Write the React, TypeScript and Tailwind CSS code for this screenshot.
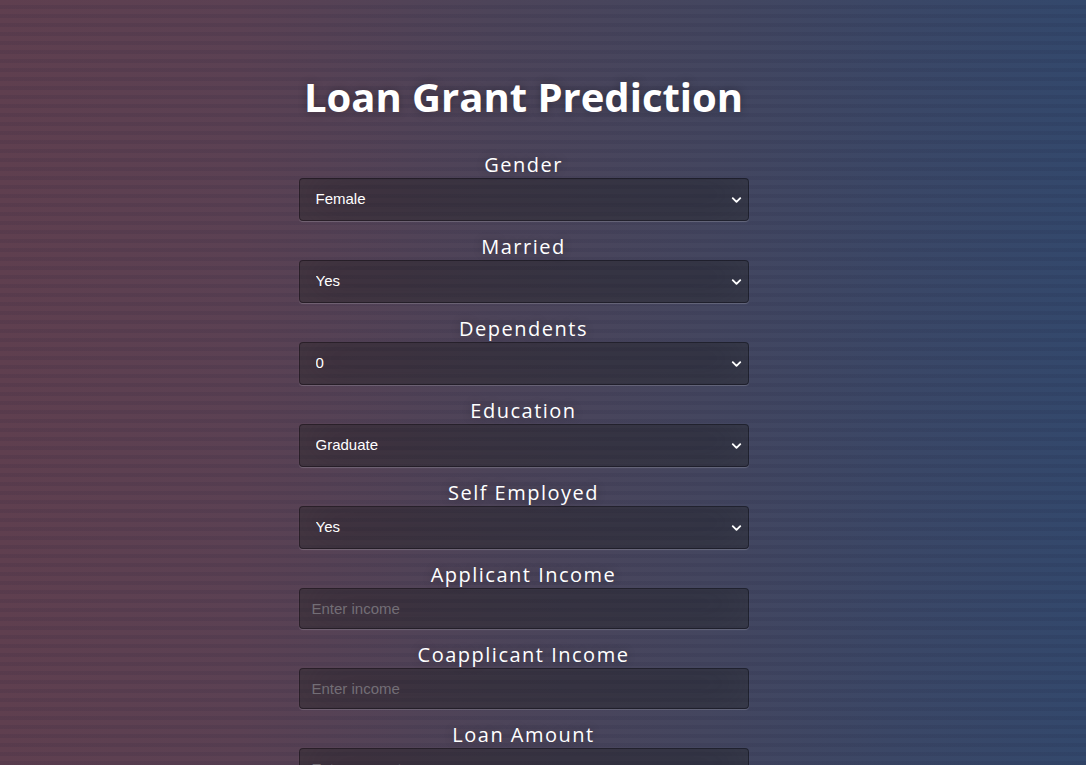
import React from 'react';
import { ChevronDown } from 'lucide-react';

interface SelectField {
  label: string;
  options: string[];
}

interface InputField {
  label: string;
  placeholder: string;
}

const selects: SelectField[] = [
  { label: 'Gender', options: ['Female', 'Male'] },
  { label: 'Married', options: ['Yes', 'No'] },
  { label: 'Dependents', options: ['0', '1', '2', '3+'] },
  { label: 'Education', options: ['Graduate', 'Not Graduate'] },
  { label: 'Self Employed', options: ['Yes', 'No'] },
];

const inputs: InputField[] = [
  { label: 'Applicant Income', placeholder: 'Enter income' },
  { label: 'Coapplicant Income', placeholder: 'Enter income' },
  { label: 'Loan Amount', placeholder: 'Enter amount' },
  { label: 'Loan Amount Term', placeholder: 'Enter term' },
];

const fieldBox =
  'w-full rounded-[4px] border border-black/30 bg-black/30 text-white text-[15px] font-["Liberation_Sans",Arial,sans-serif] outline-none shadow-[inset_0_-5px_45px_rgba(100,100,100,0.2),0_1px_1px_rgba(255,255,255,0.2)]';

const Label: React.FC<{ text: string }> = ({ text }) => (
  <label className="block text-center text-white text-[20px] leading-[27px] tracking-[1.5px] font-['Open_Sans',sans-serif] [text-shadow:0_0_10px_rgba(0,0,0,0.3)]">
    {text}
  </label>
);

const App: React.FC = () => {
  return (
    <div className="min-h-screen w-full bg-[linear-gradient(to_right,#5f3f4f_0%,#5b4153_22%,#4d4459_45%,#44465f_65%,#3b4766_82%,#33486c_100%)]">
      <div className="min-h-screen w-full flex justify-center pr-[39px] bg-[repeating-linear-gradient(to_bottom,rgba(0,0,0,0)_0px,rgba(0,0,0,0)_5px,rgba(20,20,50,0.09)_5px,rgba(20,20,50,0.09)_9px)]">
        <div className="w-[450px] pt-[73px] pb-16">
          <h1 className="mb-[30px] text-center text-white text-[40px] leading-[48px] font-bold font-['Open_Sans',sans-serif] [text-shadow:0_0_10px_rgba(0,0,0,0.3)]">
            Loan Grant Prediction
          </h1>

          <form className="flex flex-col">
            {selects.map((field) => (
              <div key={field.label} className="mb-[12px]">
                <Label text={field.label} />
                <div className="relative">
                  <select className={`${fieldBox} h-[43px] appearance-none pl-[16px] pr-10`}>
                    {field.options.map((o) => (
                      <option key={o} className="bg-[#3a3440]">{o}</option>
                    ))}
                  </select>
                  <ChevronDown
                    className="pointer-events-none absolute right-[5px] top-1/2 -translate-y-1/2 w-[15px] h-[15px] text-white"
                    strokeWidth={3}
                  />
                </div>
              </div>
            ))}

            {inputs.map((field) => (
              <div key={field.label} className="mb-[12px]">
                <Label text={field.label} />
                <input
                  type="text"
                  placeholder={field.placeholder}
                  className={`${fieldBox} h-[41px] px-[12px] placeholder:text-[#736e76]`}
                />
              </div>
            ))}

            <button
              type="button"
              className="mt-4 h-[44px] rounded-[4px] bg-[#4a77d4] text-white text-[18px] font-['Open_Sans',sans-serif] border border-[#3762bc]"
            >
              Predict
            </button>
          </form>
        </div>
      </div>
    </div>
  );
};

export default App;
